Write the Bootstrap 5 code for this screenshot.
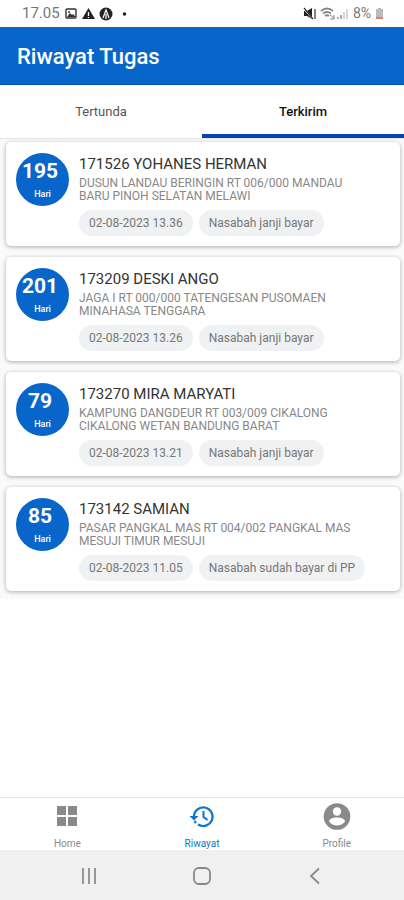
<!DOCTYPE html>
<html lang="id">
<head>
<meta charset="utf-8">
<meta name="viewport" content="width=device-width, initial-scale=1">
<title>Riwayat Tugas</title>
<link href="https://cdn.jsdelivr.net/npm/bootstrap@5.3.0/dist/css/bootstrap.min.css" rel="stylesheet">
<style>
body { font-family: Roboto, "Liberation Sans", sans-serif; background: #fff; color: #333; }
.status-bar { height: 27px; padding: 0 20px 0 22px; font-size: 14px; color: #777; }
.clock { font-size: 15px; }
.app-bar { height: 58px; padding: 2px 17px 0; background: #0866cb; border-bottom: 1px solid #0650b5; }
.app-bar h1 { font-size: 22px; line-height: 28px; font-weight: 500; }
.tab-row { height: 54px; border-bottom: 1px solid #e6e6e6; }
.tab-row .tab-btn { border: 0; border-bottom: 4px solid transparent; background: none; font-size: 13px; color: #555; padding: 4px 0 0; }
.tab-row .tab-btn.active { border-bottom-color: #0545ae; color: #111; font-weight: 500; }
.task-list { padding: 3px 4px 8px 6px; gap: 11px; background: #fafafa; }
.task { border: 0; border-radius: 5px; padding: 11px 10px 10px; gap: 10px; box-shadow: 0 1px 4px rgba(0,0,0,.32); }
.days { width: 53px; height: 53px; background: #0866cb; }
.days strong { font-size: 21px; line-height: 24px; font-weight: 700; padding-right: 5px; }
.days span { font-size: 9px; line-height: 12px; font-weight: 500; margin-top: 5px; }
.task h2 { font-size: 15px; line-height: 20px; font-weight: 400; color: #333; padding-top: 1px; }
.address { font-size: 12px; line-height: 13px; color: #888; padding-top: 3px; }
.pill { font-size: 12px; line-height: 16px; padding: 5px 10px; background: #eff1f2; color: #777; }
.pill-row { gap: 6px; margin-top: 7px; }
.bottom-nav { height: 53px; border-top: 1px solid #e4e4e4; }
.bottom-nav a { color: #8a8a8a; font-size: 10px; line-height: 12px; padding-top: 3px; gap: 5px; }
.bottom-nav a.active { color: #0b76d1; }
.system-nav { height: 50px; background: #f0f0f0; padding: 0 32px; }
.system-nav button { border: 0; background: none; padding: 0; color: #888; }
</style>
<script src="https://cdn.jsdelivr.net/npm/bootstrap@5.3.0/dist/js/bootstrap.bundle.min.js" defer></script>
</head>
<body class="d-flex flex-column min-vh-100">
<div class="status-bar d-flex align-items-center justify-content-between">
  <div class="d-flex align-items-center gap-1">
    <span class="clock">17.05</span>
    <svg width="66" height="14" viewBox="0 0 66 14" aria-hidden="true">
      <rect x="2" y="2" width="10" height="9" rx="1" fill="none" stroke="#333" stroke-width="1.4"/><path d="M3 10l3-4 2 2 1-1 3 3z" fill="#333"/><circle cx="5" cy="5" r="1" fill="#333"/>
      <path d="M24.500 1L31 12H18z" fill="#222"/><path d="M24.500 5v4M24.500 10v1" stroke="#fff" stroke-width="1.300"/>
      <circle cx="42" cy="7" r="6.500" fill="#222"/><path d="M39 11l3-8 3 8M42 7v5" fill="none" stroke="#fff" stroke-width="1.200"/>
      <circle cx="60.500" cy="7" r="1.800" fill="#222"/>
    </svg>
  </div>
  <div class="d-flex align-items-center gap-1">
    <svg width="46" height="14" viewBox="0 0 46 14" aria-hidden="true">
      <path d="M1 4h3l5-3v11L4 9H1z" fill="#222"/><path d="M0 1l10 11" stroke="#fff" stroke-width="1.500"/><path d="M1 1l9 11M12 2v10" stroke="#333" stroke-width="1.200"/>
      <path d="M18 4q6-5 12 0M20 6.500q4-3 8 0M22 9q2-1.500 4 0" fill="none" stroke="#888" stroke-width="1.800"/><path d="M27 8l4 3M31 8v4h-4" stroke="#888" fill="none"/>
      <path d="M35 10v2M38 8v4" stroke="#999" stroke-width="1.600"/><path d="M41 5v7M44 2v10" stroke="#ccc" stroke-width="1.600"/>
    </svg>
    <span>8%</span>
    <svg width="9" height="14" viewBox="0 0 9 14" aria-hidden="true"><path d="M3 1h3v1h2v8H1V2h2z" fill="#bbb"/><path d="M1 10h7v2H1z" fill="#ed7b70"/></svg>
  </div>
</div>
<header class="app-bar d-flex align-items-center text-white"><h1 class="m-0">Riwayat Tugas</h1></header>
<div class="tab-row d-flex" role="tablist">
  <button type="button" class="tab-btn flex-fill w-50" role="tab" aria-selected="false">Tertunda</button>
  <button type="button" class="tab-btn active flex-fill w-50" role="tab" aria-selected="true">Terkirim</button>
</div>
<main class="flex-grow-1">
  <div class="task-list d-flex flex-column">
    <article class="task card flex-row">
      <div class="days rounded-circle text-white d-flex flex-column align-items-center justify-content-center flex-shrink-0"><strong>195</strong><span>Hari</span></div>
      <div class="flex-grow-1"><h2 class="m-0">171526 YOHANES HERMAN</h2><p class="address m-0">DUSUN LANDAU BERINGIN RT 006/000 MANDAU<br>BARU PINOH SELATAN MELAWI</p>
        <div class="pill-row d-flex"><span class="pill rounded-pill">02-08-2023 13.36</span><span class="pill rounded-pill">Nasabah janji bayar</span></div></div>
    </article>
    <article class="task card flex-row">
      <div class="days rounded-circle text-white d-flex flex-column align-items-center justify-content-center flex-shrink-0"><strong>201</strong><span>Hari</span></div>
      <div class="flex-grow-1"><h2 class="m-0">173209 DESKI ANGO</h2><p class="address m-0">JAGA I RT 000/000 TATENGESAN PUSOMAEN<br>MINAHASA TENGGARA</p>
        <div class="pill-row d-flex"><span class="pill rounded-pill">02-08-2023 13.26</span><span class="pill rounded-pill">Nasabah janji bayar</span></div></div>
    </article>
    <article class="task card flex-row">
      <div class="days rounded-circle text-white d-flex flex-column align-items-center justify-content-center flex-shrink-0"><strong>79</strong><span>Hari</span></div>
      <div class="flex-grow-1"><h2 class="m-0">173270 MIRA MARYATI</h2><p class="address m-0">KAMPUNG DANGDEUR RT 003/009 CIKALONG<br>CIKALONG WETAN BANDUNG BARAT</p>
        <div class="pill-row d-flex"><span class="pill rounded-pill">02-08-2023 13.21</span><span class="pill rounded-pill">Nasabah janji bayar</span></div></div>
    </article>
    <article class="task card flex-row">
      <div class="days rounded-circle text-white d-flex flex-column align-items-center justify-content-center flex-shrink-0"><strong>85</strong><span>Hari</span></div>
      <div class="flex-grow-1"><h2 class="m-0">173142 SAMIAN</h2><p class="address m-0">PASAR PANGKAL MAS RT 004/002 PANGKAL MAS<br>MESUJI TIMUR MESUJI</p>
        <div class="pill-row d-flex"><span class="pill rounded-pill">02-08-2023 11.05</span><span class="pill rounded-pill">Nasabah sudah bayar di PP</span></div></div>
    </article>
  </div>
</main>
<nav class="bottom-nav row g-0 text-center" aria-label="Menu utama">
  <a href="#" class="col d-flex flex-column align-items-center text-decoration-none"><svg width="32" height="32" viewBox="0 0 32 32" fill="currentColor" aria-hidden="true"><path d="M6 5h9v9H6zM17 5h9v9h-9zM6 16h9v9H6zM17 16h9v9h-9z"/></svg><span>Home</span></a>
  <a href="#" class="col d-flex flex-column align-items-center text-decoration-none active" aria-current="page"><svg width="32" height="32" viewBox="0 0 32 32" fill="none" stroke="currentColor" stroke-width="2.200" aria-hidden="true"><path d="M8 16a9.300 9.300 0 1 1 4 7.300"/><path d="M17.500 10v6l4 3" stroke-width="2"/><path d="M8.500 20l1.500 2"/><path d="M3.500 15h9L8 19.500z" fill="currentColor" stroke="none"/></svg><span>Riwayat</span></a>
  <a href="#" class="col d-flex flex-column align-items-center text-decoration-none"><svg width="32" height="32" viewBox="0 0 32 32" aria-hidden="true"><circle cx="16" cy="15.500" r="13.300" fill="currentColor"/><circle cx="16" cy="10.500" r="4.200" fill="#fff"/><path d="M8 20.500c0-5.500 16-5.500 16 0-4 5.400-12 5.400-16 0z" fill="#fff"/></svg><span>Profile</span></a>
</nav>
<div class="system-nav d-flex align-items-center">
  <button type="button" class="flex-fill" aria-label="Aplikasi terbaru"><svg width="20" height="20" viewBox="0 0 20 20" stroke="currentColor" stroke-width="1.700"><path d="M4 2v16M10 2v16M16 2v16"/></svg></button>
  <button type="button" class="flex-fill" aria-label="Beranda"><svg width="20" height="20" viewBox="0 0 20 20" fill="none" stroke="currentColor" stroke-width="1.800"><rect x="2" y="2" width="16" height="16" rx="5"/></svg></button>
  <button type="button" class="flex-fill" aria-label="Kembali"><svg width="20" height="20" viewBox="0 0 20 20" fill="none" stroke="currentColor" stroke-width="1.800"><path d="M14 2.500L6 10l8 7.500"/></svg></button>
</div>
</body>
</html>
